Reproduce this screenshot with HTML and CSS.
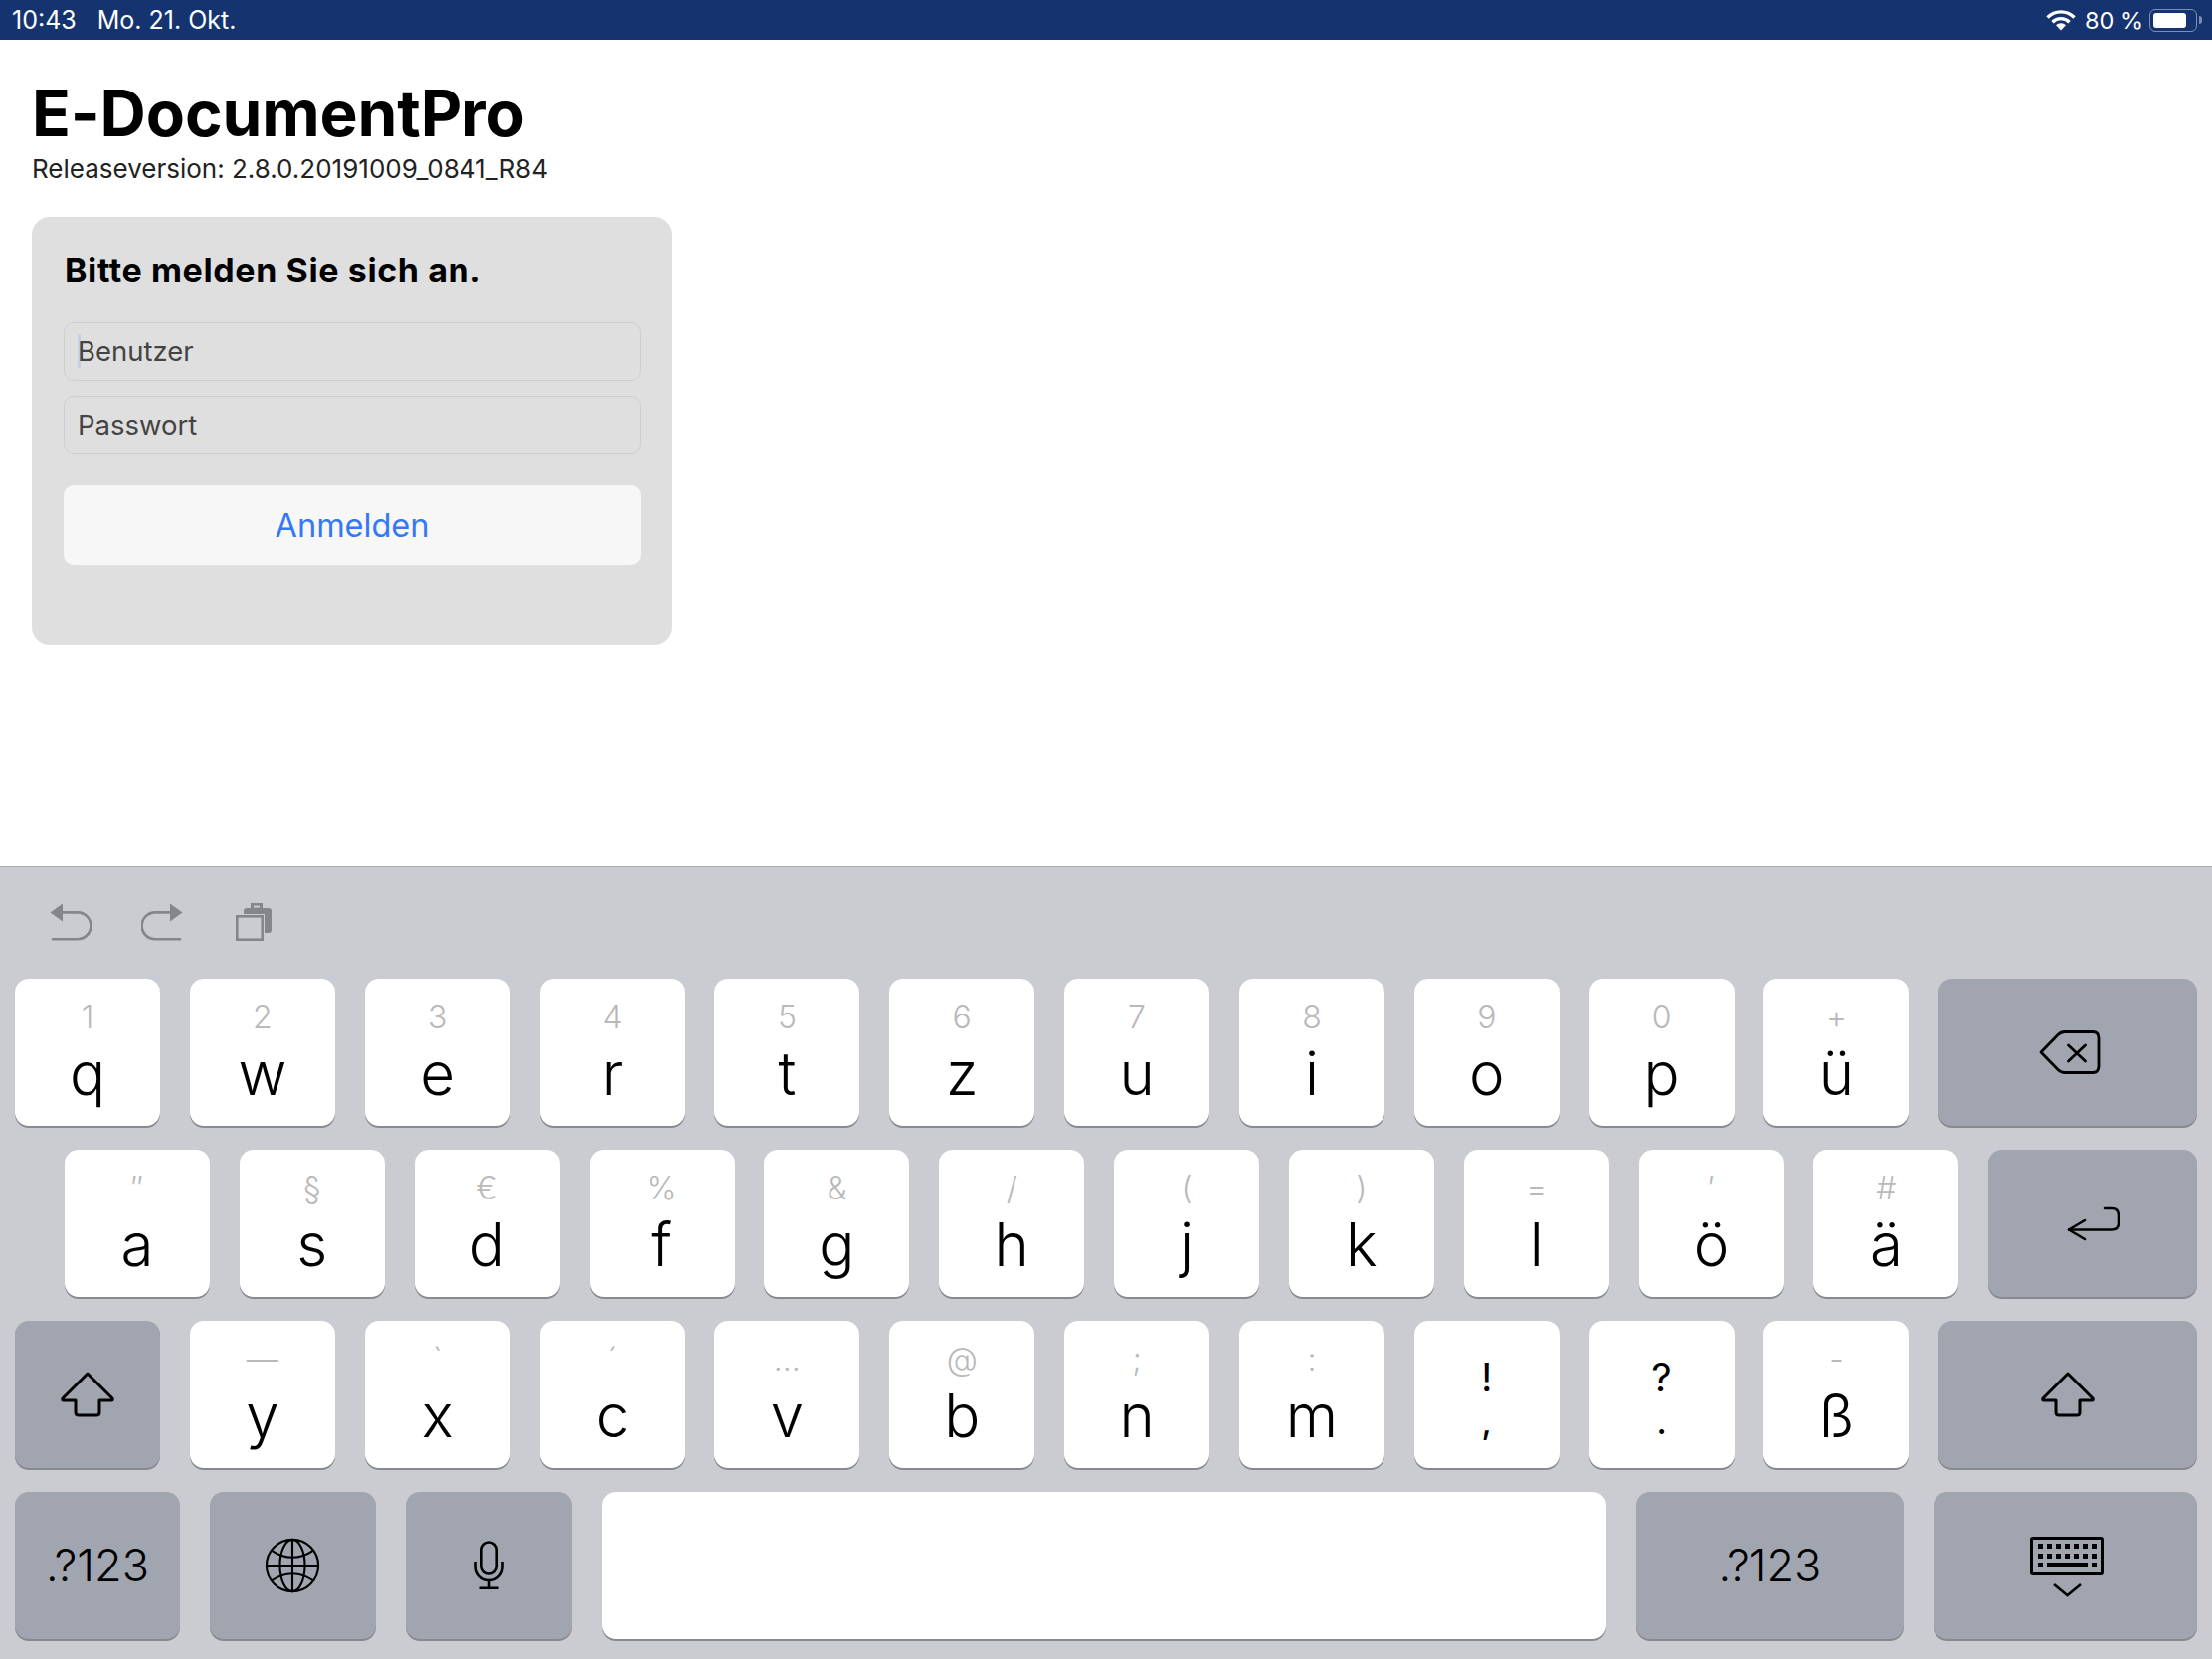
FILE: index.html
```html
<!DOCTYPE html>
<html lang="de">
<head>
  <meta charset="UTF-8">
  <title>E-DocumentPro</title>
  <link rel="stylesheet" href="styles.css">
</head>
<body>
  <!-- iPad status bar -->
  <div class="status-bar">
    <div class="status-left">
      <span>10:43</span>
      <span>Mo. 21. Okt.</span>
    </div>
    <div class="status-right">
      <svg class="wifi" viewBox="0 0 30 22" width="30" height="22">
        <path d="M1.5 8.5A19 19 0 0 1 28.5 8.5" fill="none" stroke="#fff" stroke-width="3.4"/>
        <path d="M6.5 13.2A12 12 0 0 1 23.5 13.2" fill="none" stroke="#fff" stroke-width="3.4"/>
        <path d="M15 21.5L10 16.3A7 7 0 0 1 20 16.3Z" fill="#fff"/>
      </svg>
      <span class="battery-text">80 %</span>
      <div class="battery"><div class="battery-fill"></div></div>
      <div class="battery-nub"></div>
    </div>
  </div>

  <main class="content">
    <h1 class="app-title">E-DocumentPro</h1>
    <p class="release">Releaseversion: 2.8.0.20191009_0841_R84</p>

    <form class="login-card">
      <h2 class="login-title">Bitte melden Sie sich an.</h2>
      <div class="field"><span class="caret"></span><span>Benutzer</span></div>
      <div class="field"><span>Passwort</span></div>
      <div class="login-button">Anmelden</div>
    </form>
  </main>

  <!-- on-screen keyboard -->
  <section class="keyboard">
    <div class="shortcuts">
      <svg class="undo" viewBox="0 0 42 38" width="42" height="38">
        <path d="M0.5 9.4L13 0.5V18.5Z" fill="#85868b"/>
        <path d="M3 36.2H28A13.4 13.4 0 0 0 28 9.4H12" fill="none" stroke="#85868b" stroke-width="2.6" stroke-linecap="round"/>
      </svg>
      <svg class="redo" viewBox="0 0 42 38" width="42" height="38">
        <path d="M0.5 9.4L13 0.5V18.5Z" fill="#85868b"/>
        <path d="M3 36.2H28A13.4 13.4 0 0 0 28 9.4H12" fill="none" stroke="#85868b" stroke-width="2.6" stroke-linecap="round"/>
      </svg>
      <svg class="paste" viewBox="0 0 37 38" width="37" height="38">
        <path d="M8 11V8Q8 5 11 5H15V0H27V5H33Q36 5 36 8V27Q36 30 33 30H29V11Z" fill="#85868b"/>
        <rect x="18" y="2.6" width="6" height="2" fill="#cbccd2"/>
        <rect x="1.3" y="13.3" width="25.4" height="23.4" fill="#cbccd2" stroke="#85868b" stroke-width="2.6"/>
      </svg>
    </div>

    <div class="key-row">
      <div class="key"><span class="hint">1</span><span class="letter">q</span></div>
      <div class="key"><span class="hint">2</span><span class="letter">w</span></div>
      <div class="key"><span class="hint">3</span><span class="letter">e</span></div>
      <div class="key"><span class="hint">4</span><span class="letter">r</span></div>
      <div class="key"><span class="hint">5</span><span class="letter">t</span></div>
      <div class="key"><span class="hint">6</span><span class="letter">z</span></div>
      <div class="key"><span class="hint">7</span><span class="letter">u</span></div>
      <div class="key"><span class="hint">8</span><span class="letter">i</span></div>
      <div class="key"><span class="hint">9</span><span class="letter">o</span></div>
      <div class="key"><span class="hint">0</span><span class="letter">p</span></div>
      <div class="key"><span class="hint">+</span><span class="letter">ü</span></div>
      <div class="key key-dark key-grow">
        <svg class="icon-delete" viewBox="0 0 62 44" width="62" height="44" fill="none" stroke="#000" stroke-width="2.8" stroke-linejoin="round" stroke-linecap="round">
          <path d="M2 22L19 4.5Q22 1.5 26 1.5H54Q60 1.5 60 8V36Q60 42.5 54 42.5H26Q22 42.5 19 39.5Z"/>
          <path d="M29.5 15L46.5 31M46.5 15L29.5 31"/>
        </svg>
      </div>
    </div>

    <div class="key-row key-row-indent">
      <div class="key"><span class="hint">″</span><span class="letter">a</span></div>
      <div class="key"><span class="hint">§</span><span class="letter">s</span></div>
      <div class="key"><span class="hint">€</span><span class="letter">d</span></div>
      <div class="key"><span class="hint">%</span><span class="letter">f</span></div>
      <div class="key"><span class="hint">&amp;</span><span class="letter">g</span></div>
      <div class="key"><span class="hint">/</span><span class="letter">h</span></div>
      <div class="key"><span class="hint">(</span><span class="letter">j</span></div>
      <div class="key"><span class="hint">)</span><span class="letter">k</span></div>
      <div class="key"><span class="hint">=</span><span class="letter">l</span></div>
      <div class="key"><span class="hint">′</span><span class="letter">ö</span></div>
      <div class="key"><span class="hint">#</span><span class="letter">ä</span></div>
      <div class="key key-dark key-grow">
        <svg class="icon-return" viewBox="0 0 56 38" width="56" height="38" fill="none" stroke="#000" stroke-width="2.6" stroke-linejoin="round" stroke-linecap="round">
          <path d="M39 3H46Q53 3 53 10V18Q53 24.5 46 24.5H3"/>
          <path d="M19 15L3 24.5L19 34"/>
        </svg>
      </div>
    </div>

    <div class="key-row">
      <div class="key key-dark">
        <svg viewBox="0 0 56 48" width="56" height="48" fill="none" stroke="#000" stroke-width="3" stroke-linejoin="round">
          <path d="M28 3L53 28Q54 30 52 30H40V42Q40 45 37 45H19Q16 45 16 42V30H4Q2 30 3 28Z"/>
        </svg>
      </div>
      <div class="key"><span class="hint">—</span><span class="letter">y</span></div>
      <div class="key"><span class="hint">`</span><span class="letter">x</span></div>
      <div class="key"><span class="hint">´</span><span class="letter">c</span></div>
      <div class="key"><span class="hint">…</span><span class="letter">v</span></div>
      <div class="key"><span class="hint">@</span><span class="letter">b</span></div>
      <div class="key"><span class="hint">;</span><span class="letter">n</span></div>
      <div class="key"><span class="hint">:</span><span class="letter">m</span></div>
      <div class="key"><span class="punct">!</span><span class="punct-low">,</span></div>
      <div class="key"><span class="punct">?</span><span class="punct-low">.</span></div>
      <div class="key"><span class="hint">-</span><span class="letter">ß</span></div>
      <div class="key key-dark key-grow">
        <svg viewBox="0 0 56 48" width="56" height="48" fill="none" stroke="#000" stroke-width="3" stroke-linejoin="round">
          <path d="M28 3L53 28Q54 30 52 30H40V42Q40 45 37 45H19Q16 45 16 42V30H4Q2 30 3 28Z"/>
        </svg>
      </div>
    </div>

    <div class="key-row">
      <div class="key key-dark key-symbols">.?123</div>
      <div class="key key-dark key-util">
        <svg viewBox="0 0 58 58" width="56" height="56" fill="none" stroke="#000" stroke-width="2.2">
          <circle cx="29" cy="29" r="27"/>
          <ellipse cx="29" cy="29" rx="13" ry="27"/>
          <path d="M29 2V56M2 29H56"/>
          <path d="M7 13Q29 28 51 13M7 45Q29 30 51 45"/>
        </svg>
      </div>
      <div class="key key-dark key-util">
        <svg class="icon-mic" viewBox="0 0 32 50" width="32" height="50" fill="none" stroke="#000" stroke-width="2.6">
          <rect x="8.3" y="1.5" width="15.4" height="32" rx="7.7"/>
          <path d="M2.5 21V26.5A13.5 13.5 0 0 0 29.5 26.5V21"/>
          <path d="M16 40V47.5M6.5 47.8H25.5"/>
        </svg>
      </div>
      <div class="key key-space"></div>
      <div class="key key-dark key-symbols-wide">.?123</div>
      <div class="key key-dark key-hide">
        <svg class="icon-hide" viewBox="0 0 76 62" width="76" height="62">
          <rect x="2.5" y="2.5" width="71" height="36" rx="1.5" fill="none" stroke="#000" stroke-width="3"/>
          <path d="M9 8h5v5h-5zM18 8h5v5h-5zM27 8h5v5h-5zM36 8h5v5h-5zM45 8h5v5h-5zM54 8h5v5h-5zM63 8h5v5h-5z"/>
          <path d="M9 18h5v5h-5zM18 18h5v5h-5zM27 18h5v5h-5zM36 18h5v5h-5zM45 18h5v5h-5zM54 18h5v5h-5zM63 18h5v5h-5z"/>
          <path d="M9 27h5v5h-5zM18 27h41v5h-41zM63 27h5v5h-5z"/>
          <path d="M25 49L38.5 60L52 49" fill="none" stroke="#000" stroke-width="2.6"/>
        </svg>
      </div>
    </div>
  </section>
</body>
</html>
```

FILE: styles.css
```css
/* Global styles */
body {
  margin: 0;
  height: 1668px;
  display: flex;
  flex-direction: column;
  background-color: #fff;
  color: #000;
  font-family: Inter, "Noto Sans", sans-serif;
  overflow: hidden;
}

/* Status bar */
.status-bar {
  height: 40px;
  flex: none;
  display: flex;
  justify-content: space-between;
  align-items: center;
  padding: 0 10px 0 12px;
  background-color: #15346f;
  color: #fff;
  font-size: 25px;
}

.status-left {
  display: flex;
  gap: 21px;
}

.status-right {
  display: flex;
  align-items: center;
  font-size: 23.5px;
}

.battery-text {
  margin: 0 6px 0 9px;
}

.battery {
  box-sizing: border-box;
  width: 48px;
  height: 23px;
  padding: 3px;
  border: 1.5px solid #7d8fb2;
  border-radius: 6px;
}

.battery-fill {
  width: 33px;
  height: 100%;
  background-color: #fff;
  border-radius: 3px;
}

.battery-nub {
  width: 3px;
  height: 8px;
  margin-left: 2px;
  background-color: #7d8fb2;
  border-radius: 0 3px 3px 0;
}

/* Login page */
.content {
  flex: 1;
  padding: 0 32px;
}

.app-title {
  margin: 38px 0 0;
  font-size: 64px;
  line-height: 72px;
  font-weight: 700;
  letter-spacing: -0.1px;
}

.release {
  margin: 4px 0 0;
  font-size: 26px;
  line-height: 32px;
  color: #222;
}

.login-card {
  box-sizing: border-box;
  width: 644px;
  height: 430px;
  margin-top: 32px;
  padding: 32px 32px 0;
  background-color: #dfdfdf;
  border-radius: 18px;
}

.login-title {
  margin: 0 0 30px 1px;
  font-size: 34px;
  line-height: 44px;
  font-weight: 700;
  letter-spacing: 0.6px;
}

.field {
  box-sizing: border-box;
  height: 58.5px;
  margin-bottom: 15px;
  padding-left: 13px;
  display: flex;
  align-items: center;
  border: 1.5px solid #cfcfcf;
  border-radius: 10px;
  font-size: 27.5px;
  color: #444;
}

.caret {
  width: 3px;
  height: 34px;
  margin-right: -3px;
  background-color: #c3d0ea;
}

.login-button {
  height: 80px;
  margin-top: 32px;
  display: flex;
  justify-content: center;
  align-items: center;
  background-color: #f7f7f7;
  border-radius: 10px;
  font-size: 32.5px;
  color: #3478f6;
}

/* Keyboard */
.keyboard {
  box-sizing: border-box;
  height: 797px;
  flex: none;
  padding: 0 15px;
  background-color: #cbccd2;
  border-top: 1px solid #aeafb3;
}

.shortcuts {
  height: 112px;
  display: flex;
  align-items: center;
  gap: 50px;
  padding: 0 0 2px 35px;
  box-sizing: border-box;
}

.redo {
  transform: scaleX(-1);
}

.paste {
  margin-left: 3px;
}

.key-row {
  display: flex;
  gap: 29.85px;
  margin-bottom: 24.5px;
}

.key-row-indent {
  padding-left: 50px;
}

.key {
  box-sizing: border-box;
  width: 146px;
  height: 147.5px;
  flex: none;
  display: flex;
  flex-direction: column;
  align-items: center;
  background-color: #fff;
  border-radius: 14px;
  box-shadow: 0 2px 0 #88898e;
  font-weight: 300;
}

.key-dark {
  justify-content: center;
  background-color: #a1a5af;
}

.key-grow {
  flex: 1;
}

.icon-delete {
  margin-left: 4px;
}

.icon-return {
  margin: 3px 0 0 2px;
}

.icon-mic {
  margin-left: 2px;
}

.icon-hide {
  margin: 3px 0 0 3px;
}

.hint {
  height: 59px;
  padding-top: 11px;
  box-sizing: border-box;
  font-size: 32px;
  line-height: 56px;
  color: #b9b9bb;
}

.letter {
  font-size: 60px;
  line-height: 72px;
}

.punct {
  height: 41px;
  margin-top: 36px;
  font-size: 40px;
  line-height: 41px;
  font-weight: 400;
}

.punct-low {
  height: 41px;
  margin-top: 4px;
  font-size: 34px;
  line-height: 41px;
  font-weight: 500;
}

.key-symbols {
  width: 166px;
  font-size: 45px;
}

.key-util {
  width: 167px;
}

.key-space {
  width: 1010.5px;
}

.key-symbols-wide {
  width: 269px;
  font-size: 45px;
}

.key-hide {
  width: 265.5px;
}
```
